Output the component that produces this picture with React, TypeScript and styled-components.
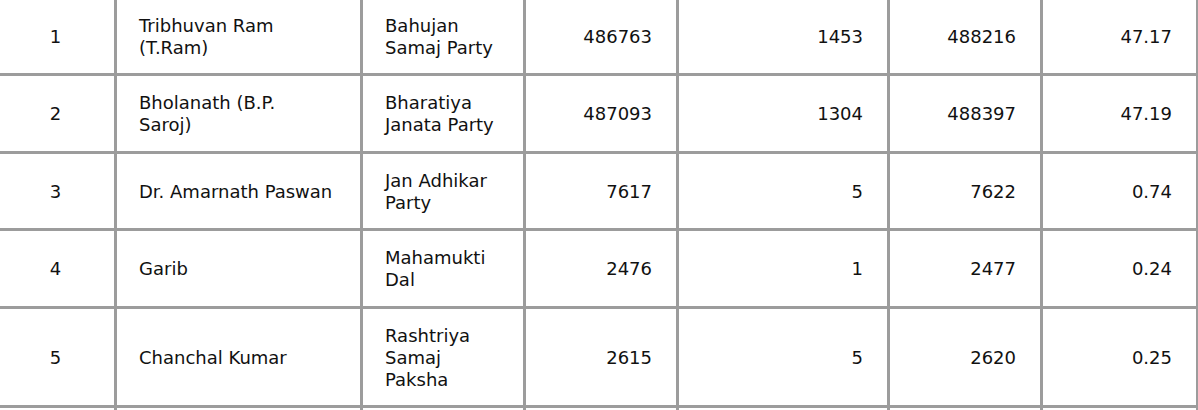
import React from "react";
import styled, { createGlobalStyle } from "styled-components";

const Global = createGlobalStyle`
  html, body { margin: 0; padding: 0; background: #fff; }
  body { font-family: "DejaVu Sans", Verdana, sans-serif; overflow: hidden; height: 410px; }
`;

const Table = styled.table`
  border-collapse: collapse;
  table-layout: fixed;
  width: 1200px;
  margin: -4.5px 0 0 -4px;
  font-size: 18px;
  line-height: 22px;
  color: #111;
`;

const Cell = styled.td<{ $align?: "left" | "right" | "center" }>`
  border: 3px solid #9c9c9c;
  padding: 16px 24px 14.5px 22px;
  text-align: ${(p) => p.$align ?? "left"};
  vertical-align: middle;
  white-space: pre-line;
`;

type Row = [string, string, string, string, string, string, string];

const rows: Row[] = [
  ["1", "Tribhuvan Ram (T.Ram)", "Bahujan Samaj Party", "486763", "1453", "488216", "47.17"],
  ["2", "Bholanath (B.P.\nSaroj)", "Bharatiya Janata Party", "487093", "1304", "488397", "47.19"],
  ["3", "Dr. Amarnath Paswan", "Jan Adhikar Party", "7617", "5", "7622", "0.74"],
  ["4", "Garib", "Mahamukti Dal", "2476", "1", "2477", "0.24"],
  ["5", "Chanchal Kumar", "Rashtriya Samaj Paksha", "2615", "5", "2620", "0.25"],
  ["", "", "", "", "", "", ""],
];

const widths = [118, 246, 163, 153, 211, 153, 156];

export default function App() {
  return (
    <>
      <Global />
      <Table>
        <colgroup>
          {widths.map((w, i) => (
            <col key={i} style={{ width: w }} />
          ))}
        </colgroup>
        <tbody>
          {rows.map((r, i) => (
            <tr key={i}>
              <Cell $align="center">{r[0]}</Cell>
              <Cell>{r[1]}</Cell>
              <Cell>{r[2]}</Cell>
              <Cell $align="right">{r[3]}</Cell>
              <Cell $align="right">{r[4]}</Cell>
              <Cell $align="right">{r[5]}</Cell>
              <Cell $align="right">{r[6]}</Cell>
            </tr>
          ))}
        </tbody>
      </Table>
    </>
  );
}
